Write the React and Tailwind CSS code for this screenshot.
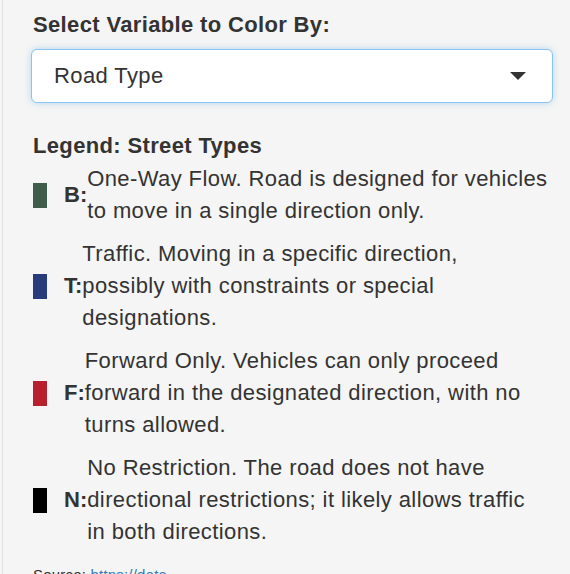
import React from 'react';

const legend = [
    {
        key: 'B',
        color: 'bg-[#3e5d4a]',
        lines: ['One-Way Flow. Road is designed for vehicles', 'to move in a single direction only.'],
    },
    {
        key: 'T',
        color: 'bg-[#283b7b]',
        lines: ['Traffic. Moving in a specific direction,', 'possibly with constraints or special', 'designations.'],
    },
    {
        key: 'F',
        color: 'bg-[#b8202e]',
        lines: ['Forward Only. Vehicles can only proceed', 'forward in the designated direction, with no', 'turns allowed.'],
    },
    {
        key: 'N',
        color: 'bg-black',
        lines: ['No Restriction. The road does not have', 'directional restrictions; it likely allows traffic', 'in both directions.'],
    },
];

const LegendRow = ({ item }) => (
    <div className="flex items-center mt-[11px] first:mt-[1px]">
        <div className={`w-[14px] h-[25px] shrink-0 ${item.color}`}></div>
        <span className="ml-[17px] font-bold tracking-normal">{item.key}:</span>
        <div>
            {item.lines.map((line) => (
                <div key={line} className="whitespace-nowrap">{line}</div>
            ))}
        </div>
    </div>
);

const App = () => {
    return (
        <div className="min-h-screen bg-[#f5f5f5] font-['Liberation_Sans',Arial,sans-serif] text-[22px] leading-[32px] tracking-[0.4px] text-[#333]">
            <div className="ml-[2px] border-l border-[#e1e1e1] pl-[30px] pr-[17px] pt-[9px] pb-6">
                <label className="block font-bold tracking-[0.35px]">Select Variable to Color By:</label>

                <div className="mt-[8px] -ml-[2px] h-[54px] flex items-center justify-between bg-white border border-[#8cc4f0] rounded-[6px] shadow-[0_0_7px_rgba(102,175,233,0.45)] pl-[22px] pr-[26px]">
                    <span>Road Type</span>
                    <svg width="16" height="8" viewBox="0 0 16 8">
                        <polygon points="0,0 16,0 8,8" fill="#333" />
                    </svg>
                </div>

                <div className="mt-[27px] font-bold tracking-[0.35px]">Legend: Street Types</div>

                <div>
                    {legend.map((item) => (
                        <LegendRow key={item.key} item={item} />
                    ))}
                </div>

                <p className="mt-[16px] text-[15px] leading-[21px] tracking-[0.2px]">
                    Source: <a className="text-[#337ab7]" href="#">https://data<br />.sfgov.org</a>
                </p>
            </div>
        </div>
    );
};

export default App;
